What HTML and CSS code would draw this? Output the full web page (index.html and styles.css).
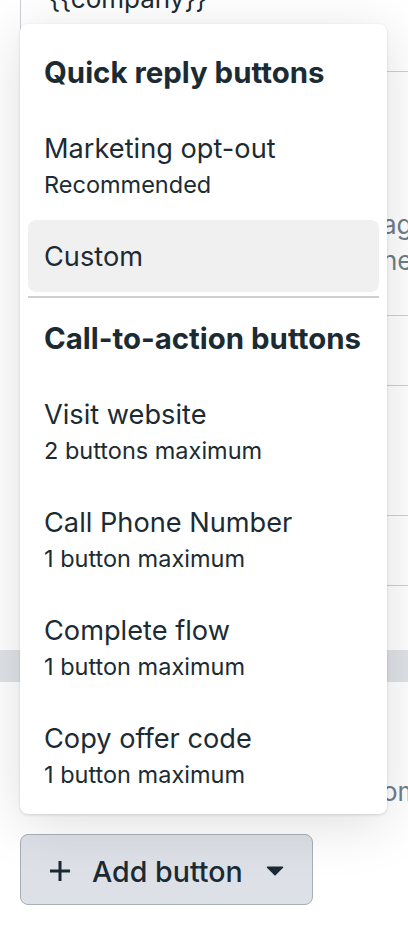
FILE: index.html
```html
<!DOCTYPE html>
<html lang="en">
<head>
    <meta charset="UTF-8">
    <meta name="viewport" content="width=device-width, initial-scale=1.0">
    <title>Buttons - Template editor</title>
    <link rel="stylesheet" href="styles.css">
</head>
<body>

<div class="editor">
    <!-- Message body field (scrolled up) -->
    <div class="field">{{company}}</div>

    <!-- Buttons section, mostly hidden under the menu -->
    <p class="hint">ag<br>ne</p>
    <div class="row"></div>
    <div class="row row-second"></div>
    <div class="band"></div>
    <p class="hint hint-last">om</p>

    <button class="add-btn" type="button">
        <svg class="plus" width="22" height="22" viewBox="0 0 22 22" aria-hidden="true">
            <path d="M11 1v20M1 11h20" stroke="currentColor" stroke-width="3" fill="none"/>
        </svg>
        <span class="add-label">Add button</span>
        <svg class="caret" width="18" height="10" viewBox="0 0 18 10" aria-hidden="true">
            <path d="M1.5 1.2h15L9 8.8z" fill="currentColor" stroke="currentColor" stroke-width="1.6" stroke-linejoin="round"/>
        </svg>
    </button>
</div>

<!-- Add button dropdown -->
<div class="menu">
    <div class="menu-heading">Quick reply buttons</div>
    <div class="menu-item">
        <div class="item-title">Marketing opt-out</div>
        <div class="item-sub">Recommended</div>
    </div>
    <div class="menu-item is-active">
        <div class="item-title">Custom</div>
    </div>

    <div class="menu-divider"></div>

    <div class="menu-heading">Call-to-action buttons</div>
    <div class="menu-item">
        <div class="item-title">Visit website</div>
        <div class="item-sub">2 buttons maximum</div>
    </div>
    <div class="menu-item">
        <div class="item-title">Call Phone Number</div>
        <div class="item-sub">1 button maximum</div>
    </div>
    <div class="menu-item">
        <div class="item-title">Complete flow</div>
        <div class="item-sub">1 button maximum</div>
    </div>
    <div class="menu-item">
        <div class="item-title">Copy offer code</div>
        <div class="item-sub">1 button maximum</div>
    </div>
</div>

</body>
</html>
```

FILE: styles.css
```css
body {
    font-family: Inter, "Liberation Sans", sans-serif;
    margin: 0;
    padding: 0;
    color: #1c2b33;
    background-color: #fff;
    overflow: hidden;
}

/* Background editor */
.editor {
    padding-left: 20px;
}

.field {
    box-sizing: border-box;
    margin-top: -48px;
    height: 120px;
    padding: 29px 0 0 28px;
    border-left: 1px solid #ccd0d5;
    border-bottom: 1px solid #ccd0d5;
    font-size: 26px;
    line-height: 36px;
}

.hint {
    margin: 135px 0 0;
    padding-left: 362px;
    font-size: 26px;
    line-height: 36px;
    color: #6f7d8a;
    white-space: nowrap;
}

.row {
    box-sizing: border-box;
    height: 71px;
    margin-top: 36px;
    border-top: 1px solid #ccd0d5;
    border-bottom: 1px solid #ccd0d5;
}

.row-second {
    margin-top: 129px;
}

.band {
    height: 32px;
    margin: 64px 0 0 -20px;
    background-color: #dfe3e8;
}

.hint-last {
    margin-top: 92px;
}

.add-btn {
    display: flex;
    align-items: center;
    box-sizing: border-box;
    height: 71px;
    margin-top: 24px;
    padding: 0 28px 0 28px;
    font-family: Inter, "Liberation Sans", sans-serif;
    font-size: 28.6px;
    font-weight: 500;
    color: #1c2b33;
    background-color: #dde1e7;
    border: 1.5px solid #a7afb8;
    border-radius: 8px;
}

.plus {
    margin-top: 3px;
}

.add-label {
    margin: 3px 23px 0 21px;
}

.caret {
    margin-top: 2px;
}

/* Dropdown menu */
.menu {
    position: absolute;
    top: 24px;
    left: 20px;
    width: 367px;
    box-sizing: border-box;
    padding: 8px 8px 4px;
    background-color: #fff;
    border-radius: 8px;
    box-shadow: 0 10px 56px rgba(0, 0, 0, 0.13), 0 1px 3px rgba(0, 0, 0, 0.14);
}

.menu-heading {
    padding: 23px 16px 21px;
    font-size: 29.4px;
    font-weight: 700;
    line-height: 36px;
}

.menu-item {
    padding: 19px 16px 17px;
    border-radius: 8px;
}

.menu-item.is-active {
    background-color: #f0f0f0;
}

.item-title {
    font-size: 27.2px;
    line-height: 36px;
}

.item-sub {
    font-size: 23.5px;
    line-height: 36px;
}

.menu-divider {
    height: 2px;
    margin-top: 4px;
    background-color: #ced0d4;
}
```
